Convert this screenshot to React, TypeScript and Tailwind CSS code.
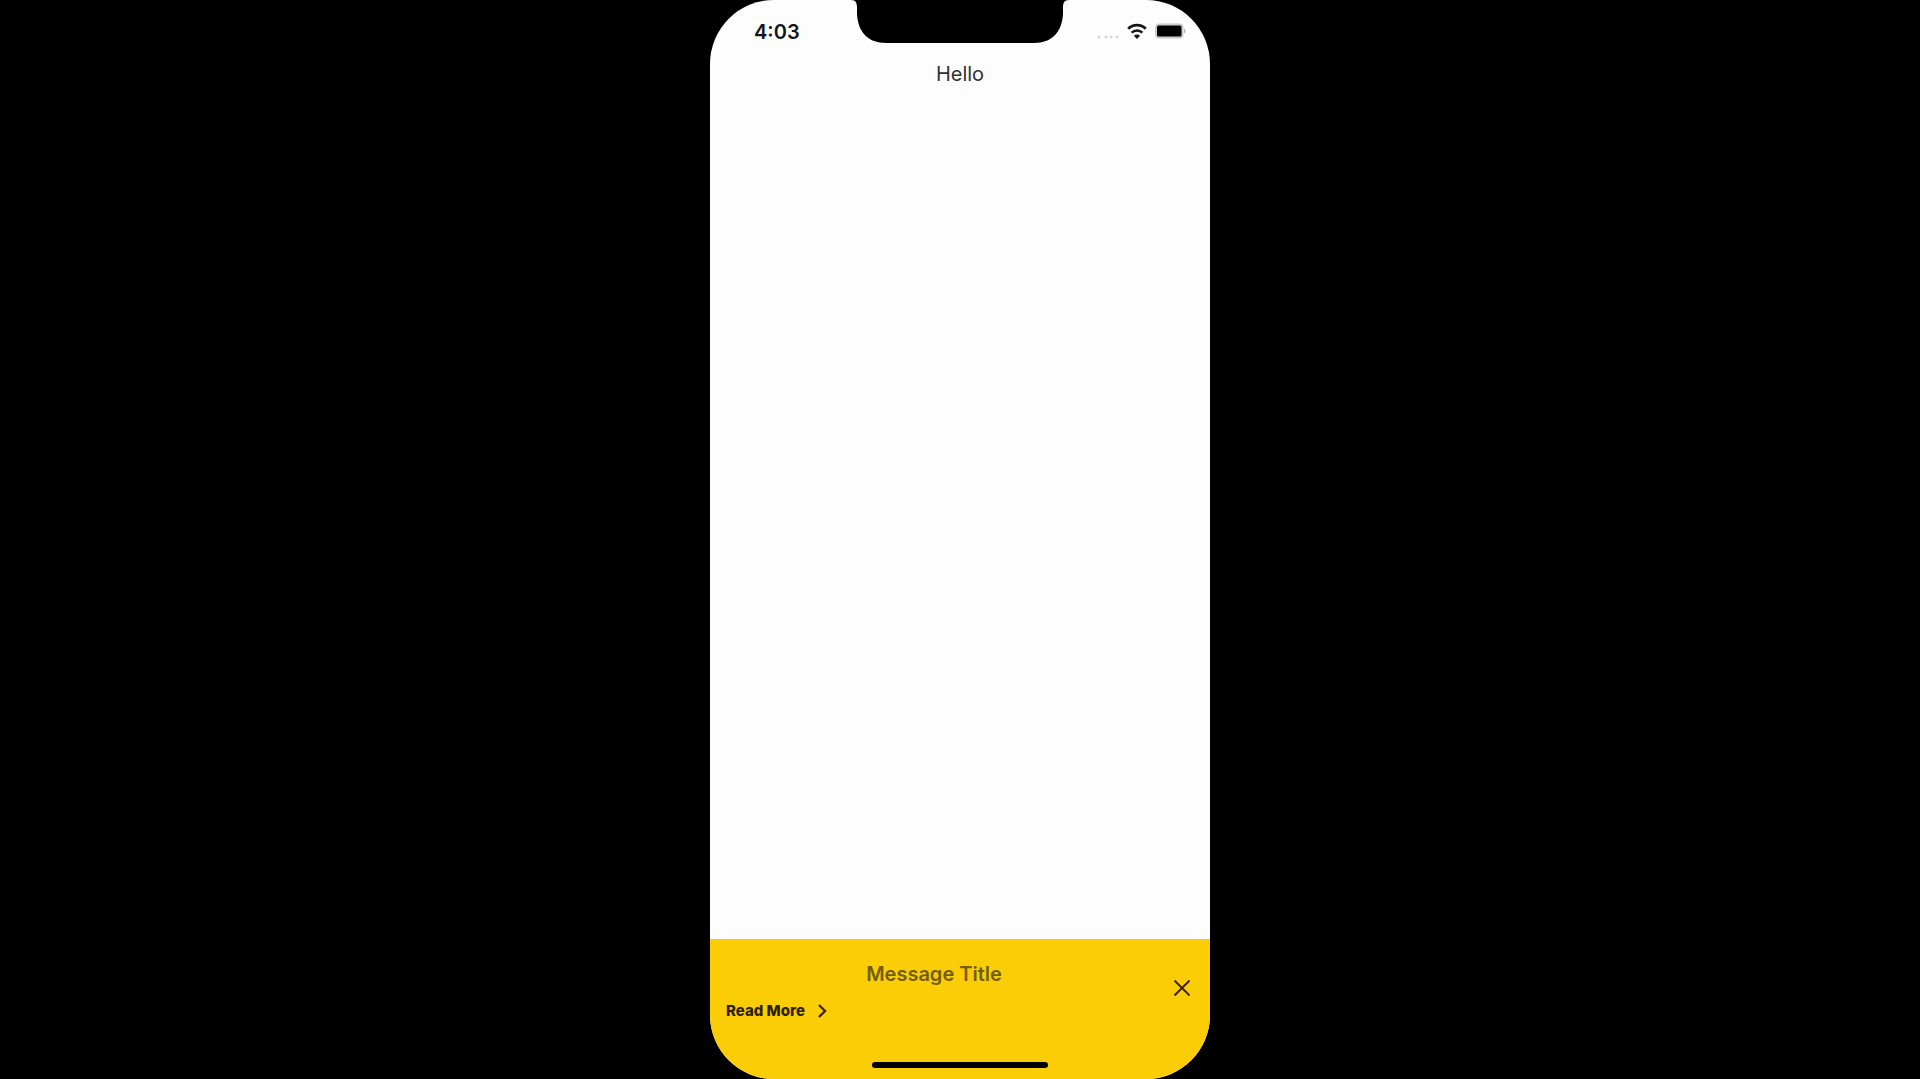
import React, { useState } from 'react';

const Notch: React.FC = () => (
    <svg width="218" height="43" viewBox="0 0 218 43" aria-hidden="true">
        <path d="M0 0C5 0 6 3 6 8V14C7 32 17 43 35 43H183C201 43 211 32 212 14V8C212 3 213 0 218 0Z" fill="#000" />
    </svg>
);

const StatusIcons: React.FC = () => (
    <div className="flex items-center">
        <svg width="22" height="6" viewBox="0 0 22 6" className="mt-3 mr-2" fill="#d6d6d6" aria-hidden="true">
            <circle cx="2" cy="3" r="1.5" />
            <circle cx="9" cy="3" r="1.5" />
            <circle cx="14" cy="3" r="1.5" />
            <circle cx="20" cy="3" r="1.5" />
        </svg>
        <svg width="20" height="16" viewBox="0 0 20 16" className="mr-2" fill="none" stroke="#151515" aria-hidden="true">
            <path d="M1.2 5.8C6.2 0.9 13.8 0.9 18.8 5.8" strokeWidth="2.8" />
            <path d="M4.6 9.6C7.7 6.7 12.3 6.7 15.4 9.6" strokeWidth="2.4" />
            <path d="M10 16L6.9 12.7C8.7 11.1 11.3 11.1 13.1 12.7Z" fill="#151515" stroke="none" />
        </svg>
        <svg width="31" height="16" viewBox="0 0 31 16" aria-hidden="true">
            <rect x="0.8" y="1" width="27" height="14" rx="3.5" fill="#d4d4d4" stroke="#c4c4c4" strokeWidth="1.2" />
            <rect x="2" y="2.5" width="24.5" height="11" rx="1.5" fill="#000" />
            <path d="M29 5.5C31 6.2 31 9.8 29 10.5Z" fill="#b5b5b5" />
        </svg>
    </div>
);

const MessageApp: React.FC = () => {
    const [showMessage, setShowMessage] = useState(true);

    return (
        <div className="min-h-screen flex justify-center bg-black font-[Inter,sans-serif]">
            <div className="w-full max-w-[500px] flex flex-col rounded-[64px] overflow-hidden bg-[#fdfdfd] text-[#151515]">
                <header className="grid grid-cols-[1fr_auto_1fr] items-start">
                    <time className="pt-5 pl-11 text-[20px] leading-6 font-semibold">4:03</time>
                    <Notch />
                    <div className="flex justify-end pt-[22px] pr-6">
                        <StatusIcons />
                    </div>
                </header>

                <main className="flex-1 pt-4">
                    <h1 className="text-center text-[20px] leading-7 text-[#303030]">Hello</h1>
                </main>

                <footer className="flex flex-col h-[140px] bg-[#fbcd06]">
                    {showMessage && (
                        <div className="flex items-start pt-[21px] pl-4">
                            <div className="flex-1 flex flex-col">
                                <h2 className="text-center text-[20px] leading-7 font-semibold text-[#735d07]">Message Title</h2>
                                <a href="#more" className="mt-[11px] flex items-center gap-3 self-start text-[15px] leading-6 font-extrabold text-[#2c2200]">
                                    Read More
                                    <svg width="10" height="14" viewBox="0 0 10 14" fill="none" stroke="#3a2500" strokeWidth="2.4" aria-hidden="true">
                                        <path d="M2 1L8 7L2 13" />
                                    </svg>
                                </a>
                            </div>
                            <button
                                type="button"
                                aria-label="Close"
                                onClick={() => setShowMessage(false)}
                                className="mt-2 ml-3 w-14 h-10 flex items-center justify-center"
                            >
                                <svg width="16" height="16" viewBox="0 0 16 16" fill="none" stroke="#3f2400" strokeWidth="2" aria-hidden="true">
                                    <path d="M0.5 0.5L15.5 15.5M15.5 0.5L0.5 15.5" />
                                </svg>
                            </button>
                        </div>
                    )}
                    <div className="mt-auto mb-[11px] mx-auto w-44 h-1.5 rounded-full bg-black" />
                </footer>
            </div>
        </div>
    );
};

export default MessageApp;
